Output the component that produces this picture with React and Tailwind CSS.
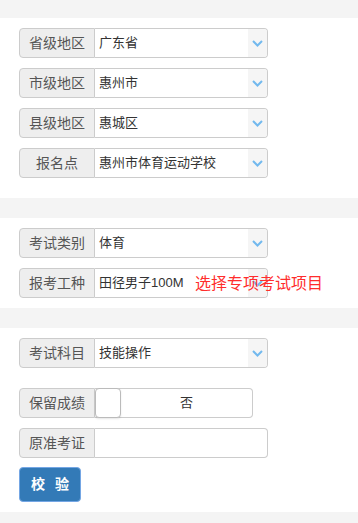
import React from 'react';

const font = { fontFamily: '"Liberation Sans", "Noto Sans CJK SC", sans-serif' };

const Chevron = () => (
    <svg width="11" height="7" viewBox="0 0 11 7" className="block">
        <path d="M1 1 L5.5 5.5 L10 1" fill="none" stroke="#72b9ee" strokeWidth="2" />
    </svg>
);

const Label = ({ children }) => (
    <div className="w-[76px] h-[30px] shrink-0 flex items-center justify-center bg-[#eeeeee] border border-[#cccccc] rounded-l-[4px] text-[14px] text-[#555555]">
        {children}
    </div>
);

const SelectRow = ({ label, value }) => (
    <div className="flex">
        <Label>{label}</Label>
        <div className="w-[173px] h-[30px] flex border border-l-0 border-[#cccccc] rounded-r-[4px] bg-white overflow-hidden">
            <div className="flex-1 flex items-center pl-[4px] text-[13px] text-[#333333]">{value}</div>
            <div className="w-[19px] bg-[#f5f5f5] flex items-center justify-center">
                <Chevron />
            </div>
        </div>
    </div>
);

const Gap = () => <div className="h-[20px] bg-[#f4f4f4]" />;

export default function App() {
    return (
        <div className="w-[358px] h-[523px] bg-white overflow-hidden" style={font}>
            <div className="h-[18px] bg-[#f4f4f4]" />

            <div className="px-[19px] pt-[10px] pb-[20px] flex flex-col gap-[10px]">
                <SelectRow label="省级地区" value="广东省" />
                <SelectRow label="市级地区" value="惠州市" />
                <SelectRow label="县级地区" value="惠城区" />
                <SelectRow label="报名点" value="惠州市体育运动学校" />
            </div>

            <Gap />

            <div className="px-[19px] pt-[10px] pb-[10px] flex flex-col gap-[10px]">
                <SelectRow label="考试类别" value="体育" />
                <div className="relative">
                    <SelectRow label="报考工种" value="田径男子100M" />
                    <span className="absolute left-[176px] top-[4px] text-[16px] text-[#ff2d2d] whitespace-nowrap">选择专项考试项目</span>
                </div>
            </div>

            <Gap />

            <div className="px-[19px] pt-[10px] pb-[10px] flex flex-col">
                <SelectRow label="考试科目" value="技能操作" />

                <div className="flex mt-[20px]">
                    <Label>保留成绩</Label>
                    <div className="w-[158px] h-[30px] flex border border-l-0 border-[#cccccc] rounded-r-[4px] bg-white">
                        <div className="w-[26px] h-[30px] -mt-px border border-[#bbbbbb] rounded-[4px] bg-white shadow-[0_1px_2px_rgba(0,0,0,0.1)]" />
                        <div className="flex-1 flex items-center justify-center text-[13px] text-[#333333]">否</div>
                    </div>
                </div>

                <div className="flex mt-[10px]">
                    <Label>原准考证</Label>
                    <div className="w-[173px] h-[30px] border border-l-0 border-[#cccccc] rounded-r-[4px] bg-white" />
                </div>

                <button className="mt-[9px] w-[62px] h-[35px] bg-[#337ab7] border border-[#74a6e4] rounded-[4px] text-white text-[14px] font-bold tracking-[3px] pl-[3px]">
                    校 验
                </button>
            </div>

            <div className="h-[20px] bg-[#f4f4f4]" />
        </div>
    );
}
